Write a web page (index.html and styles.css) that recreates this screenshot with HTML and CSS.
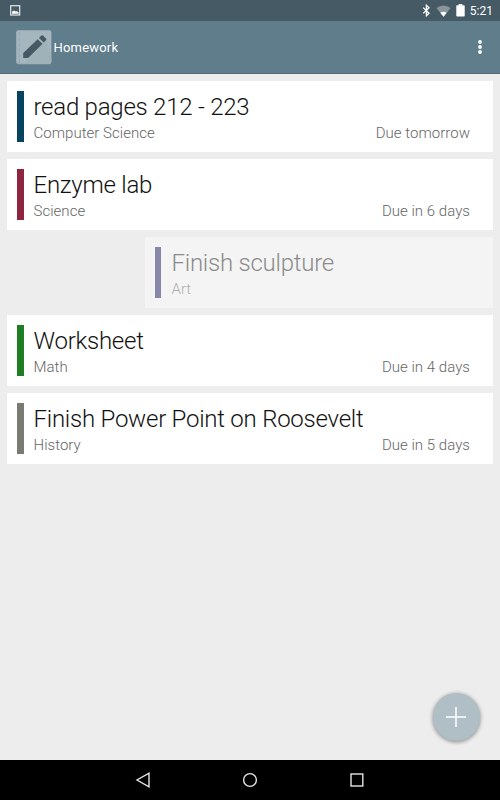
FILE: index.html
```html
<!DOCTYPE html>
<html lang="en">
<head>
<meta charset="utf-8">
<title>Homework</title>
<link rel="stylesheet" href="styles.css">
</head>
<body>
<div class="screen">
  <div class="status">
    <svg class="shot" width="11" height="11" viewBox="0 0 11 11"><rect x=".7" y=".7" width="9" height="9.3" fill="none" stroke="#e3e8ea" stroke-width="1.2"/><path d="M2 8.8V6.8L4 5.6l1.5 1L7 6.2 8.6 7.3v1.5z" fill="#fff"/></svg>
    <div class="indicators">
      <svg width="9" height="13" viewBox="0 0 9 13"><path d="M1.2 3.6 7 9.2 4.4 11.7V1.3L7 3.8 1.2 9.4" fill="none" stroke="#fff" stroke-width="1.3"/></svg>
      <svg class="wifi" width="15" height="12" viewBox="0 0 15 12"><path d="M.4 3Q7.5-2.2 14.6 3L7.5 11.8z" fill="#89959b"/><path d="M4.3 7.7Q7.5 5.7 10.7 7.7L7.5 11.8z" fill="#fff"/></svg>
      <svg class="battery" width="9" height="13" viewBox="0 0 9 13"><path d="M2.7 0h3.6v1.3h1.6q.8 0 .8.8v9.7q0 .8-.8.8H1.1q-.8 0-.8-.8V2.1q0-.8.8-.8h1.6z" fill="#fff"/></svg>
      <span class="clock">5:21</span>
    </div>
  </div>
  <header class="appbar">
    <svg class="logo" width="36" height="35" viewBox="0 0 36 35"><rect x=".3" y="1" width="35" height="33.6" rx="2" fill="#8598a1"/><rect x=".3" y=".3" width="35" height="33.4" rx="2" fill="#a5b6be"/><path d="M30 8 35.3 28v3.7q0 2-2 2H9z" fill="#9fb1b9"/><path d="M3.3 2v31" stroke="#94aab8" stroke-width="1.2" stroke-dasharray="4 1.5"/><path d="M7.2 28v-5L21.7 9.2l4.8 4.6L12.2 28zM23 8l2.4-2.4q.8-.8 1.6 0l3 3q.8.8 0 1.6l-2.3 2.4z" fill="#455a65"/></svg>
    <h1 class="title">Homework</h1>
    <svg class="more" width="4" height="14" viewBox="0 0 4 14"><g fill="#fff"><circle cx="2" cy="2" r="1.9"/><circle cx="2" cy="7" r="1.9"/><circle cx="2" cy="12" r="1.9"/></g></svg>
  </header>
  <main class="list">
    <article class="card"><i class="bar navy"></i><div class="content"><h2>read pages 212 - 223</h2><div class="meta"><span>Computer Science</span><span>Due tomorrow</span></div></div></article>
    <article class="card"><i class="bar red"></i><div class="content"><h2>Enzyme lab</h2><div class="meta"><span>Science</span><span>Due in 6 days</span></div></div></article>
    <article class="card swiped"><i class="bar purple"></i><div class="content"><h2>Finish sculpture</h2><div class="meta"><span>Art</span></div></div></article>
    <article class="card"><i class="bar green"></i><div class="content"><h2>Worksheet</h2><div class="meta"><span>Math</span><span>Due in 4 days</span></div></div></article>
    <article class="card"><i class="bar gray"></i><div class="content"><h2>Finish Power Point on Roosevelt</h2><div class="meta"><span>History</span><span>Due in 5 days</span></div></div></article>
    <button class="fab" aria-label="Add"><svg width="20" height="20" viewBox="0 0 20 20"><path d="M10 0v20M0 10h20" stroke="#fff" stroke-width="1.5"/></svg></button>
  </main>
  <nav class="navbar">
    <svg width="16" height="16" viewBox="0 0 16 16"><path d="M14 1.2v13.6L2 8z"/></svg>
    <svg width="16" height="16" viewBox="0 0 16 16"><circle cx="8" cy="8" r="6.4"/></svg>
    <svg width="16" height="16" viewBox="0 0 16 16"><rect x="2" y="2" width="11.8" height="12"/></svg>
  </nav>
</div>
</body>
</html>
```
FILE: styles.css
```css
* { box-sizing: border-box; }
body { margin: 0; font-family: Roboto, sans-serif; }
h1, h2 { margin: 0; }
svg { display: block; flex: none; }
.screen { width: 500px; height: 800px; display: flex; flex-direction: column; background: #ededed; overflow: hidden; }
.status { height: 21px; background: #455a65; display: flex; align-items: center; justify-content: space-between; padding: 0 7px 0 10px; flex: none; }
.indicators { display: flex; align-items: center; }
.wifi { margin-left: 5px; }
.battery { margin-left: 5px; }
.clock { margin-left: 5px; color: #fff; font-size: 12px; font-weight: 400; line-height: 20px; }
.appbar { height: 53px; background: #607d8b; border-bottom: 1px solid #4f6c7b; display: flex; align-items: center; padding: 0 18px 0 16px; flex: none; }
.title { margin: 2px 0 0 1.5px; color: #fff; font-size: 13px; font-weight: 400; line-height: 20px; letter-spacing: .2px; flex: 1; }
.list { position: relative; flex: 1; display: flex; flex-direction: column; gap: 7px; padding: 7px; }
.card { height: 71px; background: #fff; display: flex; padding: 10px; flex: none; }
.swiped { margin-left: 137.5px; background: #f4f4f4; }
.bar { width: 6.5px; height: 51px; flex: none; }
.navy { background: #064460; }
.red { background: #8e2540; }
.purple { background: #8887aa; }
.green { background: #1f7d24; }
.gray { background: #7a7b73; }
.content { flex: 1; padding: 2px 13px 0 10px; min-width: 0; }
h2 { margin-bottom: 1px; color: #111; font-size: 24px; font-weight: 300; line-height: 29px; letter-spacing: -.24px; white-space: nowrap; }
.meta { display: flex; justify-content: space-between; color: #666; font-size: 15px; font-weight: 300; line-height: 20px; letter-spacing: .03px; }
.swiped .content { padding-left: 10.5px; }
.swiped h2 { color: #8b8b8b; }
.swiped .meta { color: #b0b0b0; }
.fab { position: absolute; right: 20px; bottom: 19.5px; width: 47.5px; height: 47.5px; padding: 0; border: 0; border-radius: 50%; background: #b0bec5; box-shadow: 0 1px 4px rgba(0,0,0,.45); display: flex; align-items: center; justify-content: center; }
.navbar { height: 40px; background: #000; display: flex; align-items: center; justify-content: center; gap: 91px; flex: none; }
.navbar svg { fill: none; stroke: #e4e4e4; stroke-width: 1.4; }
```
